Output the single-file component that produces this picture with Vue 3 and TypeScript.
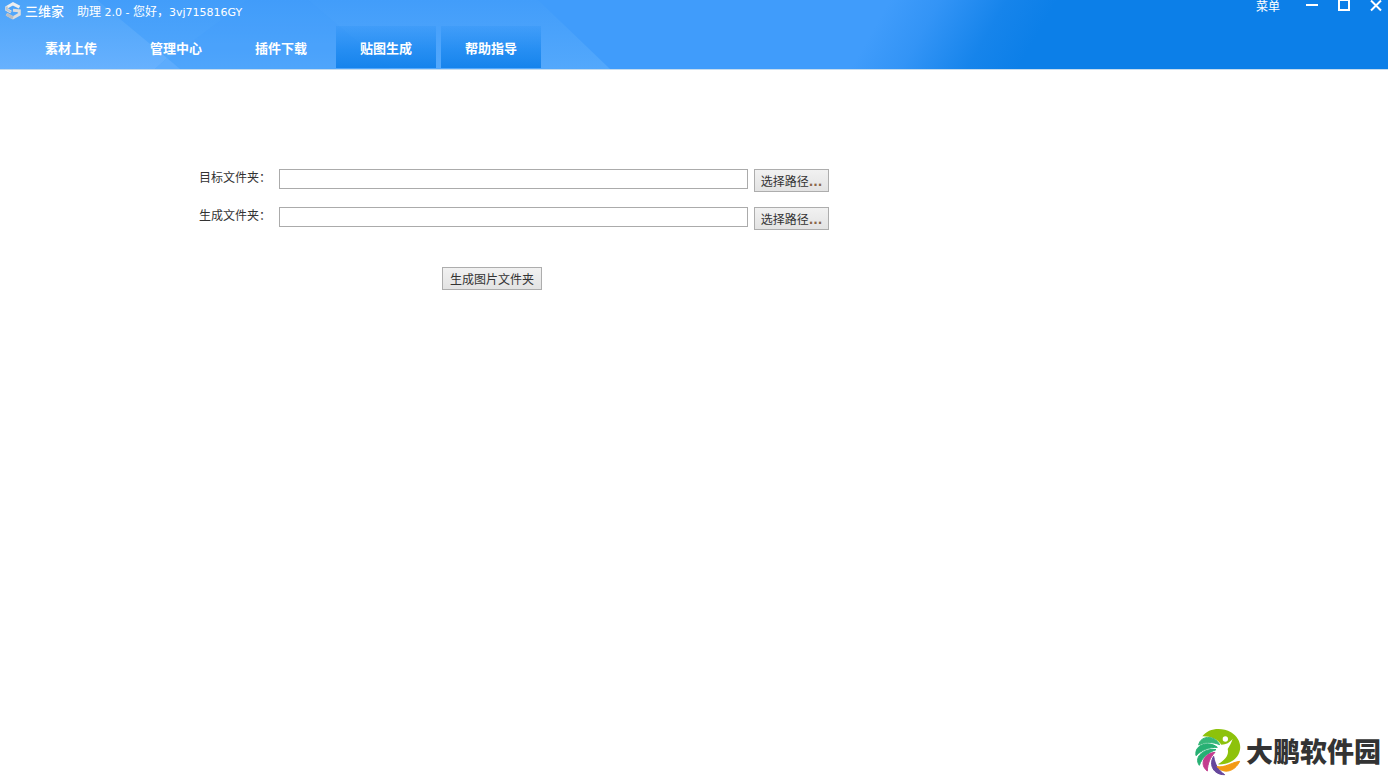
<script setup lang="ts">
import { ref } from 'vue'

interface Tab {
  label: string
  raised: boolean
}

interface FolderRow {
  id: string
  label: string
  path: string
}

const greeting = '您好\uFF0C'
const account = '3vj715816GY'

const tabs: Tab[] = [
  { label: '素材上传', raised: false },
  { label: '管理中心', raised: false },
  { label: '插件下载', raised: false },
  { label: '贴图生成', raised: true },
  { label: '帮助指导', raised: true },
]

const folders = ref<FolderRow[]>([
  { id: 'target-folder', label: '目标文件夹\uFF1A', path: '' },
  { id: 'output-folder', label: '生成文件夹\uFF1A', path: '' },
])
</script>

<template>
  <div class="window">
    <header class="header">
      <svg class="backdrop" width="1100" height="69" viewBox="0 0 1100 69" aria-hidden="true">
        <defs>
          <linearGradient id="base" gradientUnits="userSpaceOnUse" x1="890" y1="0" x2="1016" y2="72">
            <stop offset="0" stop-color="#409cfb" />
            <stop offset="0.3" stop-color="#3394f6" />
            <stop offset="0.7" stop-color="#1684eb" />
            <stop offset="1" stop-color="#0c7fe8" />
          </linearGradient>
          <linearGradient id="facet" x1="0" y1="0" x2="0" y2="1">
            <stop offset="0" stop-color="#429dfa" />
            <stop offset="1" stop-color="#53a8fc" />
          </linearGradient>
          <linearGradient id="corner" x1="0" y1="0" x2="0" y2="1">
            <stop offset="0" stop-color="#4ba3f9" />
            <stop offset="1" stop-color="#67b1fe" />
          </linearGradient>
        </defs>
        <rect width="1100" height="69" fill="url(#base)" />
        <path d="M0 0H538L610 69H0Z" fill="url(#facet)" />
        <path d="M308 0L390 69H155L248 0Z" fill="#409cfb" fill-opacity="0.22" />
        <path d="M0 0H97L167 58L155 69H0Z" fill="url(#corner)" />
        <path d="M167 58L180 69H155Z" fill="#5dacfd" />
      </svg>

      <div class="titlebar">
        <svg class="logo" width="16" height="18" viewBox="0 0 16 18" aria-hidden="true">
          <path d="M14.500 5.200L8 1.800L1.800 5.300V7.600L6 10" fill="none" stroke="#eceef0" stroke-width="3" />
          <path d="M1.500 12.200L8 15.900L14.300 12.400V8.800L8 8.300" fill="none" stroke="#dadcde" stroke-width="3" />
          <path d="M1.800 4.500V7.600L6 10" fill="none" stroke="#c0c6cc" stroke-width="2" />
          <path d="M1.500 12.200L8 15.900" fill="none" stroke="#b9bdc2" stroke-width="3" />
        </svg>
        <span class="brand">三维家</span>
        <span class="caption">助理<span class="latin"> 2.0 - </span>{{ greeting }}<span class="latin">{{ account }}</span></span>
        <div class="controls">
          <button type="button" class="menu">菜单</button>
          <button type="button" class="control" aria-label="最小化">
            <svg width="12" height="12" viewBox="0 0 12 12"><path d="M0 5H12" stroke="#fff" stroke-width="2" /></svg>
          </button>
          <button type="button" class="control" aria-label="最大化">
            <svg width="12" height="12" viewBox="0 0 12 12"><rect x="1" y="0" width="10" height="10" fill="none" stroke="#fff" stroke-width="2" /><path d="M0 0H12" stroke="#fff" stroke-width="2" /></svg>
          </button>
          <button type="button" class="control" aria-label="关闭">
            <svg width="12" height="12" viewBox="0 0 12 12"><path d="M1 0.5L11 10.5M11 0.5L1 10.5" stroke="#fff" stroke-width="2" /></svg>
          </button>
        </div>
      </div>

      <nav class="tabs">
        <button v-for="tab in tabs" :key="tab.label" type="button" class="tab" :class="{ raised: tab.raised }">
          {{ tab.label }}
        </button>
      </nav>
    </header>

    <main class="content">
      <form class="form" @submit.prevent>
        <div v-for="row in folders" :key="row.id" class="row">
          <label :for="row.id">{{ row.label }}</label>
          <input :id="row.id" v-model="row.path" type="text" />
          <button type="button" class="push browse">选择路径<span class="dots">...</span></button>
        </div>
        <button type="submit" class="push generate">生成图片文件夹</button>
      </form>
    </main>

    <footer class="footer">
      <svg width="46" height="48" viewBox="9 9 138 144" aria-hidden="true">
        <path d="M31 34C48 10 88 5 117 22C140 36 150 60 142 82C134 106 108 120 77 118C99 106 112 90 107 72C112 62 119 53 122 41C113 53 103 58 88 59C76 42 55 33 31 34Z" fill="#8dc20b" />
        <circle cx="100" cy="42" r="8" fill="#fff" />
        <g stroke-width="3" stroke-linejoin="round">
          <path d="M20 60C24 33 66 27 83 59C60 50 40 51 20 60Z" fill="#36b779" stroke="#36b779" />
          <path d="M12 92C6 58 51 46 76 67C51 67 30 74 12 92Z" fill="#27b073" stroke="#27b073" />
          <path d="M22 121C3 94 40 68 72 74C48 83 31 96 22 121Z" fill="#27b073" stroke="#27b073" />
          <path d="M46 138C21 119 35 85 69 82C54 98 47 115 46 138Z" fill="#c43d8e" stroke="#c43d8e" />
          <path d="M98 149C65 150 49 119 65 94C69 119 79 136 98 149Z" fill="#66479c" stroke="#66479c" />
          <path d="M75 125C99 129 119 112 143 109C129 139 96 149 75 125Z" fill="#f39a13" stroke="#f39a13" />
        </g>
      </svg>
      <span class="wordmark">大鹏软件园</span>
    </footer>
  </div>
</template>

<style>
body {
  margin: 0;
  background: #fff;
}
</style>

<style scoped>
.window {
  display: flex;
  flex-direction: column;
  min-height: 100vh;
  font-family: "Noto Sans", "Noto Sans CJK SC", sans-serif;
  font-size: 12px;
  color: #333;
}

button {
  margin: 0;
  padding: 0;
  border: 0;
  background: none;
  color: inherit;
  font: inherit;
}

.header {
  position: relative;
  overflow: hidden;
  background: #0c7fe8;
  border-bottom: 1px solid #c5dcef;
  color: #fff;
}

.backdrop {
  position: absolute;
  top: 0;
  left: 0;
}

.titlebar {
  position: relative;
  display: flex;
  align-items: flex-start;
  height: 26px;
  padding: 0 6px 0 5px;
}

.logo {
  margin-top: 2px;
}

.brand {
  margin-left: 4px;
  font-size: 13px;
  font-weight: 500;
  line-height: 22px;
}

.caption {
  margin-left: 13px;
  line-height: 24px;
  white-space: pre;
}

.latin {
  font-family: "DejaVu Sans", sans-serif;
  font-size: 11px;
}

.controls {
  display: flex;
  align-items: flex-start;
  gap: 20px;
  margin-left: auto;
}

.menu {
  margin-right: 6px;
  line-height: 14px;
}

.control {
  width: 12px;
  height: 12px;
}

.control svg {
  display: block;
}

.tabs {
  position: relative;
  display: flex;
  gap: 5px;
  padding: 0 21px 1px;
}

.tab {
  width: 100px;
  height: 42px;
  font-size: 13px;
  font-weight: 700;
}

.raised {
  background: linear-gradient(rgba(18, 131, 238, 0.15), rgba(18, 131, 238, 0.65) 55%, #1583ec);
}

.content {
  flex: 1;
  padding: 99px 0 0 199px;
}

.form {
  display: flex;
  flex-direction: column;
  align-items: flex-start;
}

.row {
  display: flex;
  align-items: flex-start;
  height: 23px;
  margin-bottom: 15px;
}

.row label {
  width: 80px;
  line-height: 17px;
}

.row input {
  box-sizing: border-box;
  width: 469px;
  height: 20px;
  padding: 0 4px;
  border: 1px solid #ababab;
  border-radius: 0;
  outline: 0;
  background: #fff;
  font: inherit;
}

.push {
  box-sizing: border-box;
  height: 23px;
  border: 1px solid #adadad;
  background: linear-gradient(#f1f1f1, #e3e3e3);
  line-height: 23px;
  white-space: nowrap;
}

.browse {
  width: 75px;
  margin-left: 6px;
}

.dots {
  color: #8a6648;
  font-family: "DejaVu Sans", sans-serif;
  font-weight: 700;
}

.generate {
  width: 100px;
  margin: 22px 0 0 243px;
}

.footer {
  display: flex;
  align-items: center;
  justify-content: flex-end;
  gap: 5px;
  padding: 0 7px 1px 0;
}

.wordmark {
  color: #333;
  font-size: 27px;
  font-weight: 900;
  line-height: 46px;
}
</style>
